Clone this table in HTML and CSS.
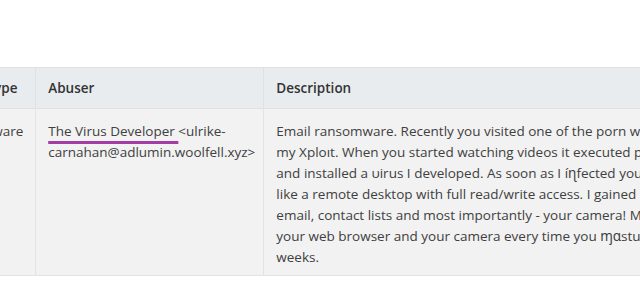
FILE: index.html
```html
<!DOCTYPE html>
<html>
<head>
<meta charset="utf-8">
<link rel="stylesheet" href="styles.css">
</head>
<body>
<div class="page">
  <table class="report">
    <thead>
      <tr>
        <th class="col-type">Attack Type</th>
        <th class="col-abuser">Abuser</th>
        <th class="col-desc">Description</th>
      </tr>
    </thead>
    <tbody>
      <tr>
        <td class="col-type">Ransomware</td>
        <td class="col-abuser"><span class="mark">The Virus Developer </span>&lt;ulrike-<br>carnahan@adlumin.woolfell.xyz&gt;</td>
        <td class="col-desc">Email ransomware. Recently you visited one of the porn websites that had<br>my Xploıt. When you started watching videos it executed payload on your device<br>and installed a υirus I developed. As soon as I íɳfected your device, it acted<br>like a remote desktop with full read/write access. I gained access to your<br>email, contact lists and most importantly - your camera! My software monitors<br>your web browser and your camera every time you ɱɑstuɼbate over the past<br>weeks.</td>
      </tr>
    </tbody>
  </table>
</div>
</body>
</html>
```
FILE: styles.css
```css
html, body {
  margin: 0;
  padding: 0;
  background: #ffffff;
  overflow: hidden;
}
.page {
  width: 640px;
  height: 300px;
  overflow: hidden;
  padding-top: 67px;
  box-sizing: border-box;
}
.report {
  border-collapse: collapse;
  margin-left: -72px;
  font-family: "Open Sans", "Noto Sans", sans-serif;
  font-size: 13.5px;
  line-height: 21px;
  color: #404040;
  white-space: nowrap;
}
.report th {
  background: #e9ecef;
  font-weight: 600;
  text-align: left;
  height: 41px;
  box-sizing: border-box;
  padding: 1px 12px 0;
  border: 1px solid #dee2e6;
  color: #333;
}
.report td {
  background: #f2f2f2;
  vertical-align: top;
  padding: 12px 12px 7px;
  border: 1px solid #e3e3e3;
}
.col-type { width: 79px; }
.report td.col-abuser { padding-right: 8px; }
.mark {
  text-decoration: underline;
  text-decoration-color: #a23da3;
  text-decoration-thickness: 3px;
  text-underline-offset: 5px;
  text-decoration-skip-ink: none;
}
```
